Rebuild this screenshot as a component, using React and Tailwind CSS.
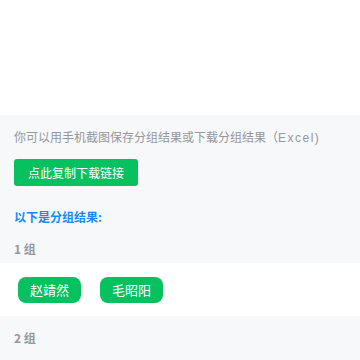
import React from 'react';

const groups = [
    { name: '1 组', members: ['赵靖然', '毛昭阳'] },
    { name: '2 组', members: [] },
];

const App = () => {
    return (
        <div className="min-h-screen bg-[#f7f8fa]" style={{ fontFamily: '"Noto Sans CJK SC", "Liberation Sans", sans-serif' }}>
            <div className="h-[115px] bg-white"></div>
            <div className="px-[14px] pt-[13px] pb-[1px]">
                <p className="text-[12px] leading-[18px] text-[#969799]">
                    你可以用手机截图保存分组结果或下载分组结果（<span className="tracking-[1.5px]" style={{ fontFamily: '"Liberation Sans", sans-serif' }}>Excel)</span>
                </p>
                <button className="mt-[12px] w-[124px] h-[27px] rounded-[3px] bg-[#07c160] text-white text-[12px] leading-[27px] block">点此复制下载链接</button>
                <p className="mt-[22px] text-[12px] leading-[18px] font-bold text-[#1989fa]">以下是分组结果:</p>
            </div>
            {groups.map((g) => (
                <div key={g.name}>
                    <div className="h-[36px] px-[14px] pt-[13px] text-[12px] leading-[18px] font-bold text-[#969799]">{g.name}</div>
                    {g.members.length > 0 && (
                        <div className="h-[53px] bg-white flex items-center gap-[19px] px-[18px]">
                            {g.members.map((m) => (
                                <span key={m} className="w-[63px] h-[26px] flex items-center justify-center rounded-[8px] bg-[#07c160] text-white text-[13px]">{m}</span>
                            ))}
                        </div>
                    )}
                </div>
            ))}
        </div>
    );
};

export default App;
